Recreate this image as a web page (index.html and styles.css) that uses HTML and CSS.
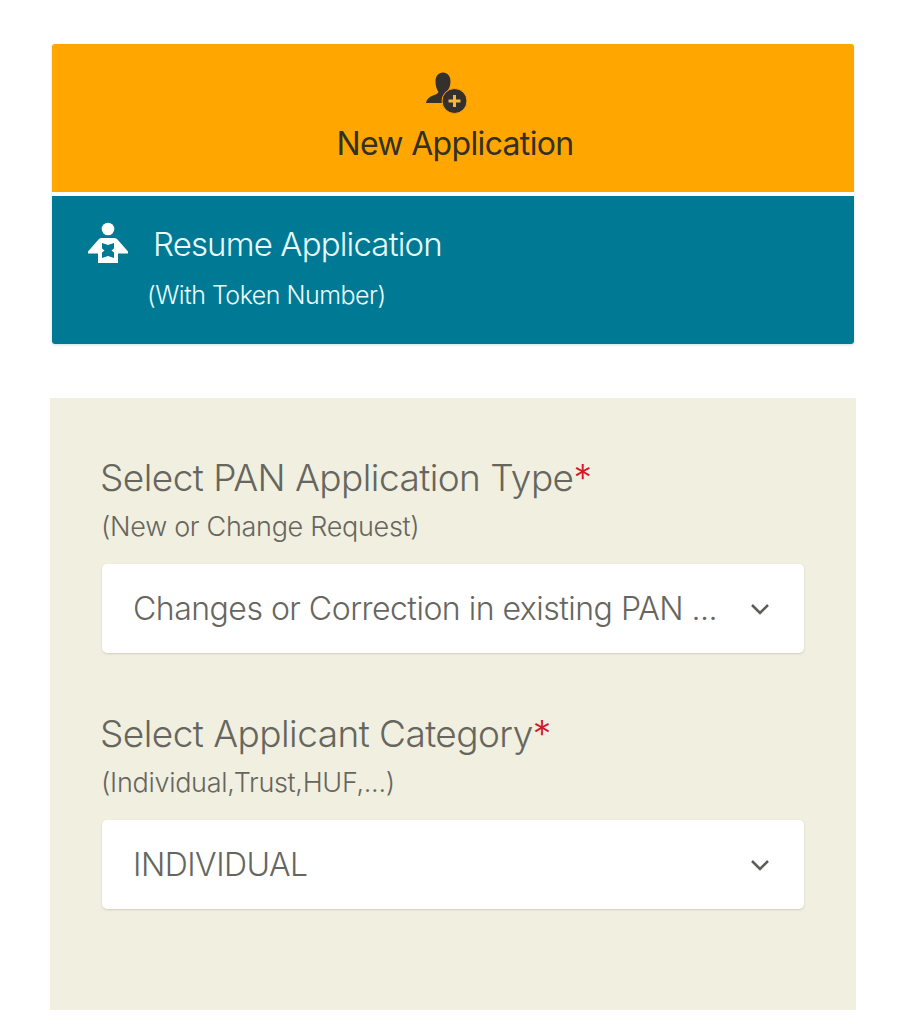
FILE: index.html
```html
<!DOCTYPE html>
<html lang="en">
<head>
<meta charset="utf-8">
<title>PAN Application</title>
<link rel="stylesheet" href="styles.css">
</head>
<body>
<main class="page">
  <section class="tabs">
    <div class="tab tab-new">
      <svg class="icon-new" viewBox="0 0 44 44" aria-hidden="true">
        <path class="ink" d="M18 .5c4.500 0 7.500 3.500 7.500 9 0 4-1.500 8-4 10.500v2L20 31H1c.5-3.500 3-6 7-7.500 3-1 5-2 5.500-3.500C11.500 17 10.500 13.500 10.500 9.500c0-5.500 3-9 7.500-9z"/>
        <circle class="ink ring" cx="29.500" cy="29" r="12.500"/>
        <path class="plus" d="M29.500 23v12M23.500 29h12"/>
      </svg>
      <span class="tab-title">New Application</span>
    </div>
    <div class="tab tab-resume">
      <div class="resume-row">
        <svg class="icon-resume" viewBox="0 0 42 44" aria-hidden="true">
          <circle class="white" cx="21" cy="7" r="6.300"/>
          <path class="white" d="M15 16h12c1.500 0 2.500.5 3.500 1.500L41 29.500v2H31V41H11v-9.500H1v-2l10.500-12c1-1 2-1.500 3.500-1.500z"/>
          <path class="teal" d="M15 21l6 2 6-2v5.500l-2.500 2 2.500 2V36l-6-2-6 2v-5.500l2.500-2-2.500-2z"/>
        </svg>
        <span class="tab-title">Resume Application</span>
      </div>
      <span class="tab-note">(With Token Number)</span>
    </div>
  </section>

  <section class="panel">
    <div class="field">
      <h2 class="field-label">Select PAN Application Type<span class="req">*</span></h2>
      <p class="field-hint">(New or Change Request)</p>
      <div class="select">
        <span>Changes or Correction in existing PAN ...</span>
        <svg class="chev" viewBox="0 0 20 12" aria-hidden="true"><path d="M2 2l8 8 8-8"/></svg>
      </div>
    </div>
    <div class="field">
      <h2 class="field-label">Select Applicant Category<span class="req">*</span></h2>
      <p class="field-hint">(Individual,Trust,HUF,...)</p>
      <div class="select">
        <span>INDIVIDUAL</span>
        <svg class="chev" viewBox="0 0 20 12" aria-hidden="true"><path d="M2 2l8 8 8-8"/></svg>
      </div>
    </div>
  </section>
</main>
</body>
</html>
```
FILE: styles.css
```css
* { box-sizing: border-box; }
html, body { margin: 0; background: #fff; }
body { font-family: Inter, "Liberation Sans", sans-serif; font-weight: 300; }
.page { width: 906px; height: 1024px; padding: 44px 50px 0; }

.tabs {
  width: 802px;
  height: 300px;
  margin-left: 2px;
  display: flex;
  flex-direction: column;
  gap: 4px;
  border-radius: 3px;
  overflow: hidden;
  box-shadow: 0 1px 3px rgba(120,160,170,.35);
}
.tab { display: flex; flex-direction: column; }
.tab-new { height: 148px; background: #ffa600; color: #33302a; align-items: center; padding-top: 28px; }
.tab-resume { height: 148px; background: #007a94; color: #eafcff; padding: 26px 0 0 35px; }
.tab-title { font-size: 33px; line-height: 40px; letter-spacing: -.85px; font-weight: 300; }
.tab-new .tab-title { margin: 8px 0 0 4px; font-weight: 400; font-size: 32px; letter-spacing: -.67px; }

.icon-new { width: 44px; height: 44px; margin-right: 12px; }
.ink { fill: #33302e; }
.ring { stroke: #ffa600; stroke-width: 1; }
.plus { stroke: #f7b53c; stroke-width: 3; fill: none; }

.resume-row { display: flex; align-items: center; gap: 24px; }
.icon-resume { width: 42px; height: 44px; }
.white { fill: #fff; }
.teal { fill: #007a94; }
.tab-note { font-size: 25px; line-height: 30px; margin: 14px 0 0 60px; letter-spacing: -.5px; font-weight: 300; }

.panel {
  width: 806px;
  height: 612px;
  margin-top: 54px;
  background: #f0efe0;
  padding: 58px 52px 0;
  color: #66665e;
}
.field { margin-bottom: 59px; }
.field-label { margin: 0 0 0 -2px; font-size: 37px; line-height: 44px; font-weight: 300; letter-spacing: -.55px; }
.req { color: #d3172b; }
.field-hint { margin: 12px 0 22px -1px; font-size: 27px; line-height: 30px; letter-spacing: -.3px; }
.select {
  width: 702px;
  height: 89px;
  background: #fff;
  border-radius: 5px;
  box-shadow: 0 1px 2px rgba(110,110,100,.25);
  display: flex;
  align-items: center;
  justify-content: space-between;
  padding: 0 34px 0 31px;
  font-size: 32px;
  letter-spacing: -.5px;
  color: #66665f;
}
.chev { width: 20px; height: 12px; fill: none; stroke: #5c5c58; stroke-width: 2.500; }
```
